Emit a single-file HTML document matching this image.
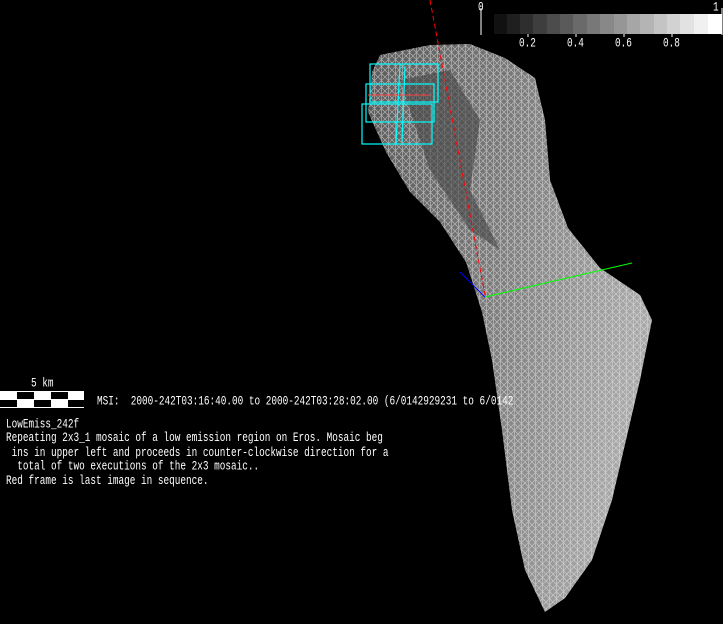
<!DOCTYPE html>
<html><head><style>
html,body{margin:0;padding:0;background:#000;width:723px;height:624px;overflow:hidden;position:relative}
.t{position:absolute;color:#fff;font-family:"Liberation Mono",monospace;font-size:9.4px;white-space:pre;line-height:10.4px;transform:scaleY(1.35);transform-origin:0 0}
</style></head><body>
<svg width="723" height="624" style="position:absolute;left:0;top:0">
<defs>
<linearGradient id="g" x1="0" y1="0" x2="1" y2="0.3">
<stop offset="0" stop-color="#5a5a5a"/><stop offset="0.5" stop-color="#7a7a7a"/><stop offset="1" stop-color="#a8a8a8"/>
</linearGradient>
<pattern id="m" width="7" height="7" patternUnits="userSpaceOnUse">
<path d="M0 0L7 7M7 0L0 7M3.5 0V7" stroke="#eee" stroke-width="0.7" opacity="0.55"/>
</pattern>
</defs>
<path d="M380 55 L430 45 L470 44 L505 58 L535 78 L545 120 L550 180 L568 228 L600 268 L640 295 L652 320 L640 380 L626 440 L612 500 L592 560 L565 598 L545 612 L525 570 L512 510 L502 430 L492 360 L482 312 L466 262 L440 222 L410 192 L386 152 L368 112 L372 72 Z" fill="url(#g)"/>
<path d="M380 55 L430 45 L470 44 L505 58 L535 78 L545 120 L550 180 L568 228 L600 268 L640 295 L652 320 L640 380 L626 440 L612 500 L592 560 L565 598 L545 612 L525 570 L512 510 L502 430 L492 360 L482 312 L466 262 L440 222 L410 192 L386 152 L368 112 L372 72 Z" fill="url(#m)"/>
<path d="M400 80 L450 70 L480 120 L470 190 L500 250 L470 230 L430 170 Z" fill="#444" opacity="0.6"/>
<line x1="430" y1="0" x2="485" y2="295" stroke="#f00" stroke-dasharray="5,3"/>
<line x1="485" y1="297" x2="632" y2="263" stroke="#0f0"/>
<line x1="460" y1="272" x2="485" y2="297" stroke="#00f"/>
<g fill="none" stroke="#0ff" stroke-width="1.2">
<rect x="370" y="64" width="68" height="38"/><rect x="366" y="84" width="68" height="38"/><rect x="362" y="104" width="70" height="40"/>
<line x1="400" y1="64" x2="396" y2="144"/><line x1="405" y1="66" x2="402" y2="142"/>
</g>
<line x1="368" y1="95" x2="430" y2="95" stroke="#f44"/>
<line x1="481" y1="8" x2="481" y2="35" stroke="#fff"/>
<line x1="722" y1="8" x2="722" y2="35" stroke="#fff"/>
<g>
<rect x="494" y="14" width="14" height="20" fill="#111"/><rect x="507" y="14" width="14" height="20" fill="#1f1f1f"/>
<rect x="520" y="14" width="14" height="20" fill="#2e2e2e"/><rect x="533" y="14" width="14" height="20" fill="#3e3e3e"/>
<rect x="547" y="14" width="14" height="20" fill="#4c4c4c"/><rect x="560" y="14" width="14" height="20" fill="#5a5a5a"/>
<rect x="573" y="14" width="14" height="20" fill="#6a6a6a"/><rect x="587" y="14" width="14" height="20" fill="#787878"/>
<rect x="600" y="14" width="14" height="20" fill="#888"/><rect x="614" y="14" width="14" height="20" fill="#969696"/>
<rect x="627" y="14" width="14" height="20" fill="#a6a6a6"/><rect x="640" y="14" width="14" height="20" fill="#b4b4b4"/>
<rect x="654" y="14" width="14" height="20" fill="#c4c4c4"/><rect x="667" y="14" width="14" height="20" fill="#d2d2d2"/>
<rect x="680" y="14" width="14" height="20" fill="#e2e2e2"/><rect x="694" y="14" width="14" height="20" fill="#f0f0f0"/>
<rect x="708" y="14" width="14" height="20" fill="#fff"/>
</g>
<g stroke="#fff"><line x1="528" y1="34" x2="528" y2="37"/><line x1="576" y1="34" x2="576" y2="37"/><line x1="624" y1="34" x2="624" y2="37"/><line x1="672" y1="34" x2="672" y2="37"/></g>
<rect x="0" y="391" width="84" height="17" fill="#fff"/>
<g fill="#000"><rect x="17" y="392" width="17" height="7"/><rect x="51" y="392" width="17" height="7"/>
<rect x="0" y="400" width="17" height="7"/><rect x="34" y="400" width="17" height="7"/><rect x="68" y="400" width="16" height="7"/></g>
</svg>
<div class="t" style="left:478px;top:1px">0</div>
<div class="t" style="left:713px;top:1px">1</div>
<div class="t" style="left:519px;top:37px">0.2</div>
<div class="t" style="left:567px;top:37px">0.4</div>
<div class="t" style="left:615px;top:37px">0.6</div>
<div class="t" style="left:663px;top:37px">0.8</div>
<div class="t" style="left:31px;top:377px">5 km</div>
<div class="t" style="left:97px;top:395px">MSI:  2000-242T03:16:40.00 to 2000-242T03:28:02.00 (6/0142929231 to 6/0142</div>
<div class="t" style="left:6px;top:418px">LowEmiss_242f
Repeating 2x3_1 mosaic of a low emission region on Eros. Mosaic beg
 ins in upper left and proceeds in counter-clockwise direction for a
  total of two executions of the 2x3 mosaic..
Red frame is last image in sequence.</div>
</body></html>
